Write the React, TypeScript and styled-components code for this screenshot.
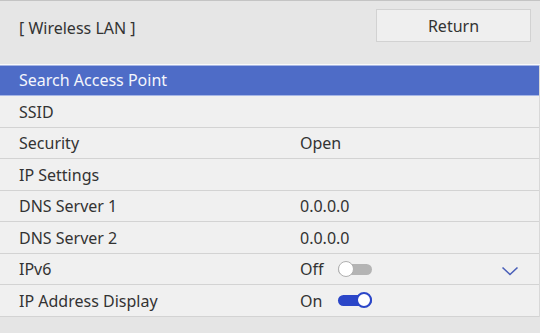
import React from "react";
import styled, { createGlobalStyle } from "styled-components";

interface Item {
  label: string;
  value?: string;
  toggle?: boolean;
  chevron?: boolean;
}

const items: Item[] = [
  { label: "Search Access Point" },
  { label: "SSID" },
  { label: "Security", value: "Open" },
  { label: "IP Settings" },
  { label: "DNS Server 1", value: "0.0.0.0" },
  { label: "DNS Server 2", value: "0.0.0.0" },
  { label: "IPv6", value: "Off", toggle: false, chevron: true },
  { label: "IP Address Display", value: "On", toggle: true },
];

const App: React.FC = () => {
  return (
    <>
      <GlobalStyle />
      <Screen>
        <Header>
          <Title>[ Wireless LAN ]</Title>
          <ReturnButton>Return</ReturnButton>
        </Header>
        <List>
          {items.map((item, i) => (
            <Row key={item.label} selected={i === 0}>
              <Label>{item.label}</Label>
              <Value>
                {item.value && (
                  <ValueText wide={item.toggle !== undefined}>{item.value}</ValueText>
                )}
                {item.toggle !== undefined && (
                  <Toggle on={item.toggle}>
                    <Knob on={item.toggle} />
                  </Toggle>
                )}
              </Value>
              {item.chevron && (
                <Chevron width="18" height="10" viewBox="0 0 18 10">
                  <path d="M1.5 1.5 L9 8.5 L16.5 1.5" fill="none" stroke="#4a5fb8" strokeWidth="1.6" />
                </Chevron>
              )}
            </Row>
          ))}
        </List>
        <Footer />
      </Screen>
    </>
  );
};

export default App;

const GlobalStyle = createGlobalStyle`
  body {
    margin: 0;
    font-family: "Noto Sans", "Open Sans", sans-serif;
  }
`;

const Screen = styled.div`
  width: 540px;
  height: 333px;
  display: flex;
  flex-direction: column;
  background: #e5e5e5;
  border-top: 1px solid #c4c4c4;
  box-sizing: border-box;
  overflow: hidden;
`;

const Header = styled.div`
  height: 63.5px;
  display: flex;
  justify-content: space-between;
  align-items: flex-start;
  padding: 8px 9px 0 19px;
  background: #e6e6e6;
  border-bottom: 1px solid #fafafa;
  box-sizing: border-box;
  flex-shrink: 0;
`;

const Title = styled.div`
  margin-top: 8px;
  font-size: 16px;
  color: #333;
`;

const ReturnButton = styled.div`
  width: 153px;
  height: 31px;
  display: flex;
  align-items: center;
  justify-content: center;
  background: #efefef;
  border: 1px solid #d2d2d2;
  font-size: 16px;
  color: #333;
`;

const List = styled.div`
  display: flex;
  flex-direction: column;
  border-right: 1px solid #d8d8d8;
`;

const Row = styled.div<{ selected?: boolean }>`
  position: relative;
  height: 31.5px;
  box-sizing: border-box;
  display: grid;
  grid-template-columns: 281px 1fr;
  align-items: center;
  padding-left: 19px;
  font-size: 16px;
  background: ${(p) => (p.selected ? "#4e6cc7" : "#f0f0f0")};
  color: ${(p) => (p.selected ? "#f4f6fc" : "#333")};
  border-top: 1px solid ${(p) => (p.selected ? "#a6b6e6" : "transparent")};
  border-bottom: 1px solid ${(p) => (p.selected ? "#a6b6e6" : "#d3d3d3")};
`;

const Label = styled.div`
  white-space: nowrap;
`;

const Value = styled.div`
  display: flex;
  align-items: center;
`;

const ValueText = styled.span<{ wide?: boolean }>`
  min-width: ${(p) => (p.wide ? "38px" : "0")};
`;

const Toggle = styled.div<{ on: boolean }>`
  position: relative;
  width: 34px;
  height: 11px;
  border-radius: 6px;
  background: ${(p) => (p.on ? "#2b46c8" : "#b4b4b4")};
`;

const Knob = styled.div<{ on: boolean }>`
  position: absolute;
  top: -3px;
  left: ${(p) => (p.on ? "18px" : "0")};
  width: 16px;
  height: 16px;
  box-sizing: border-box;
  border-radius: 50%;
  background: #fff;
  border: ${(p) => (p.on ? "2px solid #2b46c8" : "1.5px solid #b0b0b0")};
`;

const Chevron = styled.svg`
  position: absolute;
  right: 20px;
  top: 11px;
`;

const Footer = styled.div`
  flex: 1;
  background: #e5e5e5;
`;
